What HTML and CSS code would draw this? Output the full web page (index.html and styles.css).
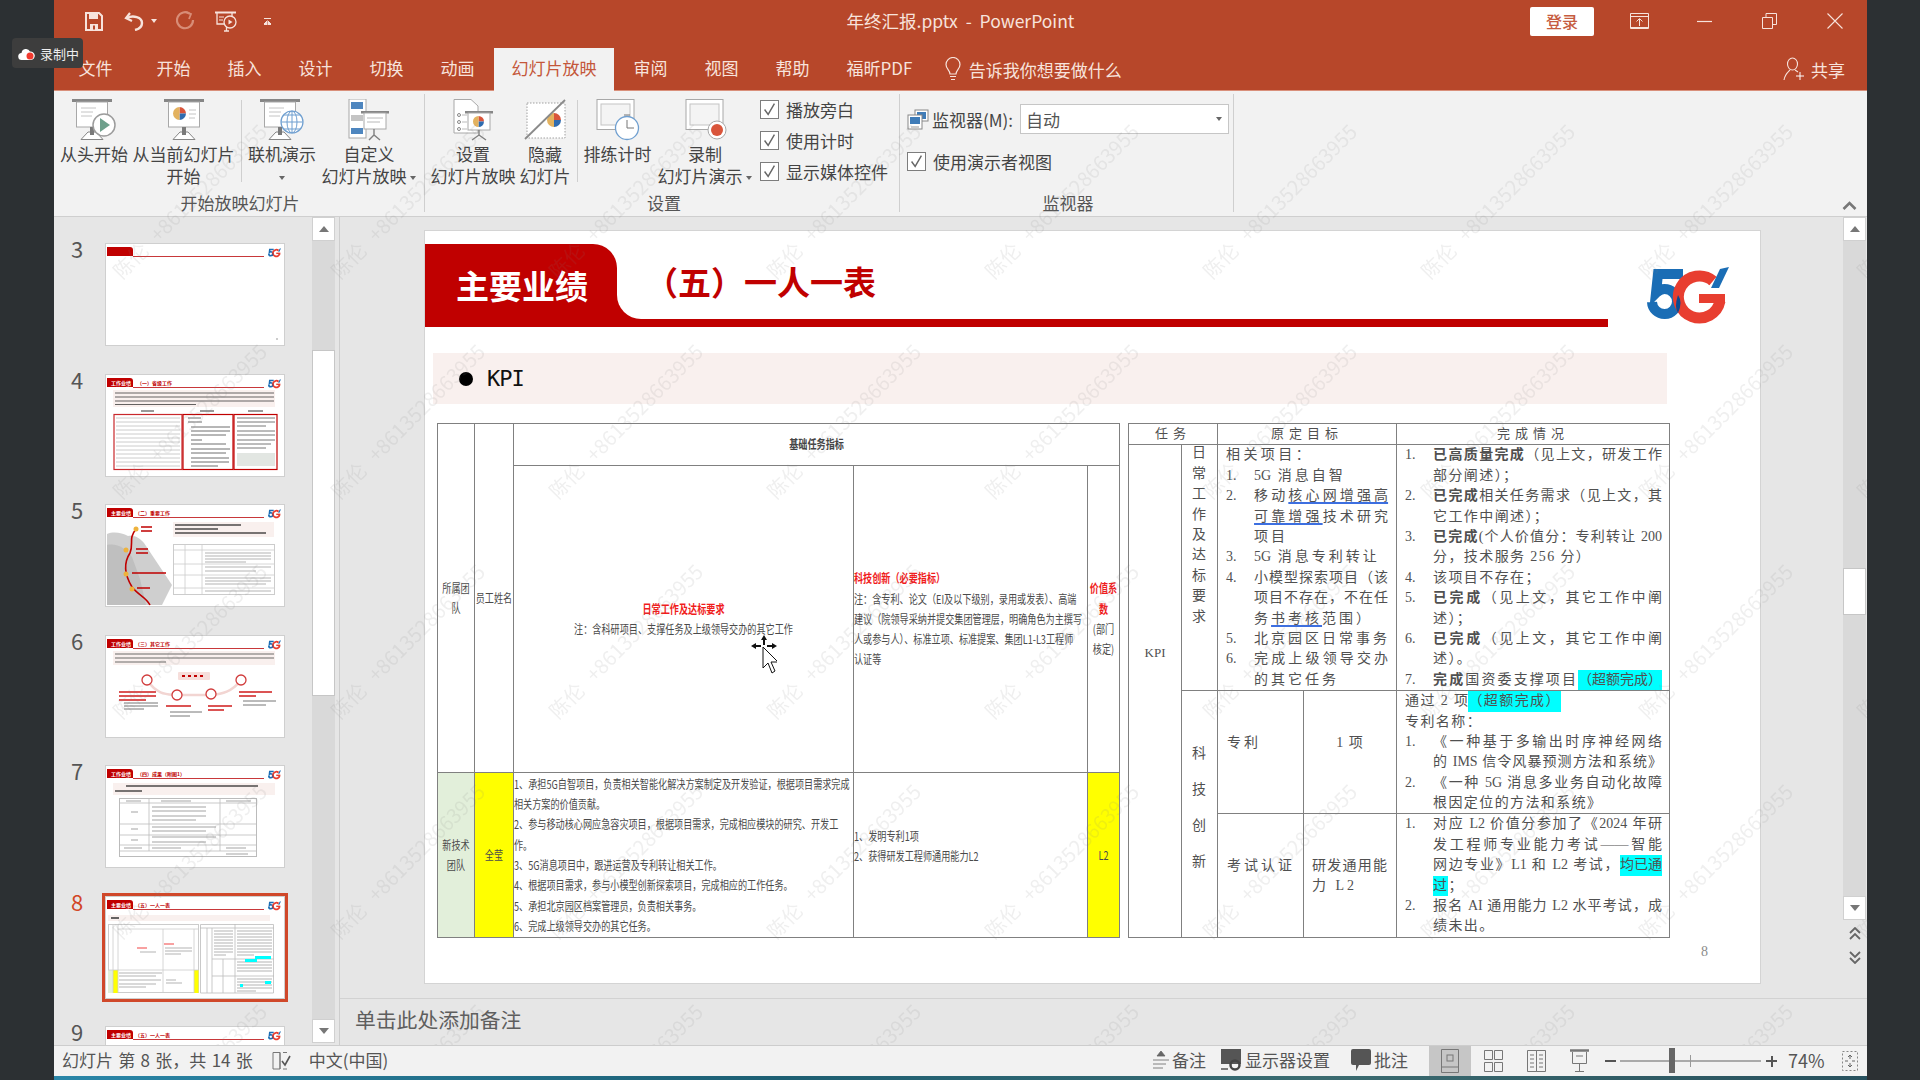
FILE: index.html
```html
<!DOCTYPE html>
<html lang="zh-CN">
<head>
  <meta charset="UTF-8">
  <title>年终汇报.pptx - PowerPoint</title>
  <link rel="stylesheet" href="styles.css">
</head>
<body>

<!-- shared drawings -->
<svg class="sprite" width="0" height="0">
  <symbol id="logo5g" viewBox="0 0 82 59">
    <path d="M36 7H11L9 26C12 23 15 22 17.5 22A12.5 12.5 0 1 1 5 35" fill="none" stroke="#1a6db5" stroke-width="10"/>
    <path d="M66 14A21 21 0 1 0 73 34" fill="none" stroke="#e83e30" stroke-width="11"/>
    <rect x="52" y="27" width="26" height="9" fill="#e83e30"/>
    <path d="M31 28Q36 35 31 46Q27 40 31 28Z" fill="#0b4a90"/>
    <path d="M57 8H67L62 18Z" fill="#e83e30"/>
    <path d="M73 2L82 0L72 21H64Z" fill="#1a6db5"/>
  </symbol>
  <symbol id="screen" viewBox="0 0 44 42">
    <rect x="0" y="0" width="40" height="3" fill="#868686"/>
    <rect x="4.5" y="3" width="31" height="25" fill="#fff" stroke="#a8a8a8"/>
    <path d="M9 40.5L16 33H24L31 40.5Z" fill="#fff" stroke="#868686"/>
    <rect x="18" y="28" width="4" height="8" fill="#7a7a7a"/>
  </symbol>
  <symbol id="pie" viewBox="0 0 14 14">
    <path d="M7 7V0A7 7 0 0 1 14 7Z" fill="#d9553b"/>
    <path d="M7 7H14A7 7 0 0 1 7 14Z" fill="#2f6cb0"/>
    <path d="M7 7V14A7 7 0 0 1 7 0Z" fill="#e3b25f"/>
  </symbol>
  <symbol id="tick" viewBox="0 0 19 19">
    <path d="M4 9.5L8 15L15 3" fill="none" stroke="#666" stroke-width="1.6"/>
  </symbol>
  <symbol id="th-head" viewBox="0 0 178 101">
    <path d="M1 3H24Q27 3 27 6V12H1Z" fill="#c00000"/>
    <path d="M27 12.5H158" stroke="#c8383a" stroke-width="1.2"/>
    <use href="#logo5g" x="162" y="4" width="13" height="10"/>
  </symbol>
</svg>

<div class="window">
<div class="app">

  <header class="titlebar">
    <div class="qat">
      <svg class="qat-save" width="18" height="19" viewBox="0 0 18 19"><path d="M1 1H14L17 4V18H1Z" fill="none" stroke="#f7e3dc" stroke-width="2"/><rect x="4" y="1" width="9" height="6" fill="#f7e3dc"/><rect x="5" y="12" width="8" height="6" fill="#f7e3dc"/><rect x="8" y="13.5" width="2" height="4" fill="#b7472a"/></svg>
      <svg class="qat-undo" width="21" height="20" viewBox="0 0 21 20"><path d="M6 2L2 7L8 10" fill="none" stroke="#f7e3dc" stroke-width="2.2"/><path d="M3 7C9 4 18 6 18 12C18 16 15 18 11 19" fill="none" stroke="#f7e3dc" stroke-width="2.4"/></svg>
      <span class="caret caret-light qat-caret"></span>
      <svg class="qat-redo" width="20" height="20" viewBox="0 0 20 20"><path d="M14 3A8 8 0 1 0 17 9" fill="none" stroke="#d88d77" stroke-width="2.2"/><path d="M10 1L15 3L13 8" fill="none" stroke="#d88d77" stroke-width="1.8"/></svg>
      <svg class="qat-show" width="24" height="21" viewBox="0 0 24 21"><path d="M1 1.5H22" stroke="#f7e3dc" stroke-width="2"/><path d="M3 2V13H12M18 2V6M10 20H15M12.5 13V20" fill="none" stroke="#f7e3dc" stroke-width="1.3"/><circle cx="16" cy="11" r="6" fill="#b7472a" stroke="#f7e3dc" stroke-width="1.3"/><path d="M14.5 8.5L18.5 11L14.5 13.5Z" fill="#f7e3dc"/><path d="M5 6H10M5 9H9" stroke="#f7e3dc"/></svg>
      <span class="qat-more"></span>
    </div>
    <div class="doc-title">年终汇报.pptx&nbsp;&nbsp;-&nbsp;&nbsp;PowerPoint</div>
    <div class="win-ctrls">
      <button class="login">登录</button>
      <span class="ctrl"><svg width="19" height="16" viewBox="0 0 19 16"><path d="M.5.5H18.5V15.5H.5ZM.5 3.5H18.5M9.5 13V6M6.5 8.5L9.5 5.5L12.5 8.5M.5 14.5H18.5" fill="none" stroke="#f7e3dc"/></svg></span>
      <span class="ctrl"><svg width="15" height="3" viewBox="0 0 15 3"><path d="M0 1.5H15" stroke="#f7e3dc" stroke-width="1.2"/></svg></span>
      <span class="ctrl"><svg width="15" height="16" viewBox="0 0 15 16"><path d="M.5 4.5H10.5V15.5H.5ZM4 4.5V.5H14.5V11.5H10.5" fill="none" stroke="#f7e3dc"/></svg></span>
      <span class="ctrl"><svg width="16" height="16" viewBox="0 0 16 16"><path d="M.5.5L15.5 15.5M15.5.5L.5 15.5" stroke="#f7e3dc" stroke-width="1.1"/></svg></span>
    </div>
  </header>

  <nav class="tabs">
    <span class="tab tab-file">文件</span>
    <span class="tab">开始</span>
    <span class="tab">插入</span>
    <span class="tab">设计</span>
    <span class="tab">切换</span>
    <span class="tab">动画</span>
    <span class="tab active">幻灯片放映</span>
    <span class="tab">审阅</span>
    <span class="tab">视图</span>
    <span class="tab">帮助</span>
    <span class="tab">福昕PDF</span>
    <span class="tell">
      <svg width="18" height="24" viewBox="0 0 18 24"><path d="M6 17C6 13 2 12 2 7.5A7 7 0 0 1 16 7.5C16 12 12 13 12 17ZM6 19.5H12M7 22.5H11" fill="none" stroke="#f7e3dc" stroke-width="1.2"/></svg>
      告诉我你想要做什么
    </span>
    <span class="share">
      <svg width="22" height="24" viewBox="0 0 22 24"><ellipse cx="9.5" cy="7" rx="5" ry="6" fill="none" stroke="#f7e3dc" stroke-width="1.1"/><path d="M1 23C2 17 5 15 7 13M12 13L15 15" fill="none" stroke="#f7e3dc" stroke-width="1.1"/><path d="M13 19H21M17 15V23" stroke="#fff"/></svg>
      共享
    </span>
  </nav>

  <section class="ribbon">
    <div class="group group-start">
      <div class="group-body">
        <div class="rbtn w72">
          <svg class="ricon" viewBox="0 0 44 42"><use href="#screen"/><path d="M9 9H24M9 13H21M9 17H20" stroke="#c4c4c4"/><circle cx="32" cy="26" r="11" fill="#fff" stroke="#9c9c9c" stroke-width="1.5"/><path d="M28 19L38 26L28 33Z" fill="#6ea08c"/></svg>
          <span>从头开始</span>
        </div>
        <div class="rbtn w107">
          <svg class="ricon" viewBox="0 0 44 42"><use href="#screen" x="2"/><use href="#pie" x="11" y="8" width="13" height="13"/><path d="M27 11H34M27 15H34M27 19H33" stroke="#c4c4c4"/></svg>
          <span>从当前幻灯片<br>开始</span>
        </div>
        <i class="rsep"></i>
        <div class="rbtn w72">
          <svg class="ricon" viewBox="0 0 44 42"><use href="#screen"/><path d="M9 9H24M9 13H21M9 17H20" stroke="#c4c4c4"/><circle cx="32" cy="23" r="11" fill="#fff" stroke="#6f9fd0" stroke-width="1.2"/><path d="M21 23H43M32 12V34M24 16H40M24 30H40" stroke="#6f9fd0"/><ellipse cx="32" cy="23" rx="5" ry="11" fill="none" stroke="#6f9fd0"/></svg>
          <span>联机演示<br><span class="caret"></span></span>
        </div>
        <div class="rbtn w102">
          <svg class="ricon" viewBox="0 0 44 42"><rect x="2" y="0" width="17" height="39" fill="#fff" stroke="#a8a8a8"/><rect x="4" y="3" width="12" height="7" fill="#4e86bf"/><rect x="4" y="16" width="12" height="6" fill="#c4c4c4"/><rect x="4" y="29" width="12" height="6" fill="#4e86bf"/><rect x="14" y="12" width="28" height="2.5" fill="#868686"/><rect x="17" y="14" width="22" height="16" fill="#fff" stroke="#a8a8a8"/><path d="M20 19H36M20 23H33" stroke="#b8b8b8"/><path d="M27 30V37M22 41L27 36L33 41" fill="none" stroke="#808080" stroke-width="1.4"/></svg>
          <span>自定义<br>幻灯片放映 <span class="caret"></span></span>
        </div>
      </div>
      <div class="glabel">开始放映幻灯片</div>
    </div>

    <div class="group group-setup">
      <div class="group-body">
        <div class="rbtn w88">
          <svg class="ricon" viewBox="0 0 44 42"><path d="M3 .5H20L27 7V34H3Z" fill="#fff" stroke="#a8a8a8"/><circle cx="8" cy="16" r="1.5" fill="none" stroke="#888"/><circle cx="8" cy="23" r="1.5" fill="none" stroke="#888"/><circle cx="8" cy="30" r="1.5" fill="none" stroke="#888"/><path d="M11 16H16M11 23H16M11 30H16" stroke="#bbb"/><rect x="14" y="12" width="28" height="2.5" fill="#868686"/><rect x="17" y="14" width="22" height="17" fill="#fff" stroke="#a8a8a8"/><use href="#pie" x="22" y="17" width="11" height="11"/><path d="M28 31V37M21 41L28 36L35 41" fill="none" stroke="#808080" stroke-width="1.4"/></svg>
          <span>设置<br>幻灯片放映</span>
        </div>
        <div class="rbtn w56">
          <svg class="ricon" viewBox="0 0 44 42"><rect x="4" y="4" width="38" height="35" fill="#fff" stroke="#a0a0a0" stroke-dasharray="1.5 1.5"/><use href="#pie" x="24" y="14" width="14" height="14"/><path d="M2 40L42 1" stroke="#8a8a8a" stroke-width="1.8"/></svg>
          <span>隐藏<br>幻灯片</span>
        </div>
        <i class="rsep"></i>
        <div class="rbtn w71">
          <svg class="ricon" viewBox="0 0 44 42"><rect x="1" y=".5" width="37" height="30" fill="#fff" stroke="#a8a8a8"/><rect x="5" y="5" width="29" height="21" fill="#f4f4f4" stroke="#c4c4c4"/><circle cx="31" cy="29" r="11.5" fill="#fff" stroke="#6f9fd0" stroke-width="1.3"/><path d="M31 21V29H38M28 16H34" fill="none" stroke="#777"/></svg>
          <span>排练计时</span>
        </div>
        <div class="rbtn w104">
          <svg class="ricon" viewBox="0 0 44 42"><rect x="3" y=".5" width="37" height="30" fill="#fff" stroke="#a8a8a8"/><rect x="7" y="5" width="29" height="21" fill="#f4f4f4" stroke="#c4c4c4"/><circle cx="34" cy="31" r="9" fill="#fff" stroke="#a8a8a8"/><circle cx="34" cy="31" r="6" fill="#d9553b"/></svg>
          <span>录制<br>幻灯片演示 <span class="caret"></span></span>
        </div>
        <div class="checks">
          <label class="chk"><svg class="box"><use href="#tick"/></svg>播放旁白</label>
          <label class="chk"><svg class="box"><use href="#tick"/></svg>使用计时</label>
          <label class="chk"><svg class="box"><use href="#tick"/></svg>显示媒体控件</label>
        </div>
      </div>
      <div class="glabel">设置</div>
    </div>

    <div class="group group-monitor">
      <div class="group-body monitor-body">
        <div class="monitor-row">
          <svg width="22" height="21" viewBox="0 0 22 21"><rect x="8" y="1" width="13" height="11" fill="#fff" stroke="#888"/><rect x="10" y="3" width="9" height="7" fill="#3f7cb8"/><rect x="1" y="6" width="14" height="14" fill="#fff" stroke="#888"/><rect x="3" y="8" width="10" height="7" fill="#3f7cb8"/><path d="M4 18H12" stroke="#999"/></svg>
          <span class="monitor-name">监视器(M):</span>
          <div class="select"><span>自动</span><span class="caret"></span></div>
        </div>
        <label class="chk chk-present"><svg class="box"><use href="#tick"/></svg>使用演示者视图</label>
      </div>
      <div class="glabel">监视器</div>
    </div>

    <svg class="collapse" width="15" height="10" viewBox="0 0 15 10"><path d="M1.5 8L7.5 2L13.5 8" fill="none" stroke="#777" stroke-width="2.6"/></svg>
  </section>

  <div class="workspace">
    <aside class="sidepane">
      <div class="thumbs">

        <div class="thumb-row"><span class="num">3</span>
          <div class="thumb"><svg viewBox="0 0 178 101"><use href="#th-head"/><path d="M170 95H172" stroke="#999"/></svg></div>
        </div>

        <div class="thumb-row"><span class="num">4</span>
          <div class="thumb"><svg viewBox="0 0 178 101"><use href="#th-head"/>
            <text class="th-tab" x="5" y="10">工作业绩</text><text class="th-title" x="31" y="10">（一）省级工作</text>
            <rect x="7" y="15" width="162" height="17" fill="#f9f0ee"/>
            <path d="M9 18H168M9 22H168M9 26H168M9 29.500H90" stroke="#333" stroke-width="1.2" opacity=".75"/>
            <path d="M35 36H48M94 36H108M142 36H157" stroke="#999" stroke-width="2"/>
            <rect x="8" y="39.500" width="68" height="55" fill="#fff" stroke="#c9282c" stroke-width="1.200"/>
            <rect x="77" y="39.500" width="50" height="55" fill="#fff" stroke="#c00000" stroke-width="1.200"/>
            <rect x="128" y="39.500" width="43" height="55" fill="#fff" stroke="#c00000" stroke-width="1.200"/>
            <path d="M10 43H74M10 47H74M10 51H74M10 55H74M10 59H74M10 63H74M10 67H74M10 71H74M10 75H74M10 79H74M10 83H74M10 87H74M10 91H74" stroke="#ccc"/>
            <path d="M82 43H95M82 47H96M85 52H124M85 56H124M85 60H120M85 65H96M85 69H120M85 74H124M85 78H120M85 83H123M85 87H123M85 91H112" stroke="#333" opacity=".7"/>
            <path d="M131 43H169M131 47H169M131 51H160M131 56H169M131 60H169M131 65H169M131 69H165M131 73H160" stroke="#333" opacity=".65"/>
            <rect x="131" y="78" width="38" height="13" fill="#e2e6e2"/>
          </svg></div>
        </div>

        <div class="thumb-row"><span class="num">5</span>
          <div class="thumb"><svg viewBox="0 0 178 101"><use href="#th-head"/>
            <text class="th-tab" x="5" y="10">主要业绩</text><text class="th-title" x="29" y="10">（二）重要工作</text>
            <path d="M1 29C8 26 16 28 22 31C30 30 34 34 38 38L66 80L56 100H1Z" fill="#cfcfcf"/>
            <path d="M1 40C12 38 20 44 26 52L34 74L40 100H1Z" fill="#b8b8b8" opacity=".7"/>
            <path d="M30 24C22 34 28 38 24 48C16 60 20 72 26 82C32 90 40 92 44 100" fill="none" stroke="#c00000" stroke-width="1.6"/>
            <circle cx="30" cy="24" r="2.500" fill="#eeb23c"/><circle cx="20" cy="45" r="2.500" fill="#eeb23c"/><circle cx="20" cy="69" r="2.500" fill="#eeb23c"/><circle cx="26" cy="84" r="2.500" fill="#eeb23c"/>
            <path d="M35 22H46M35 26H46M30 44H42M30 48H42M26 68H60M31 83H44" stroke="#c00000" stroke-width="1.6"/>
            <rect x="67" y="17" width="101" height="15" fill="#f9f0ee"/>
            <path d="M69 20H135M69 24H112M69 28H160" stroke="#222" stroke-width="1.3" opacity=".8"/>
            <rect x="67.500" y="39.500" width="101" height="50" fill="#fff" stroke="#ccc"/>
            <path d="M67 45H168M67 59H168M67 70H168M67 83H168M79 40V89M96 40V89" stroke="#ccc" stroke-width=".8"/>
            <path d="M99 48H165M99 51H165M99 54H165M99 57H140M99 62H165M99 66H150M99 73H165M99 76H165M99 79H160M99 86H165" stroke="#aaa" stroke-width=".9"/>
          </svg></div>
        </div>

        <div class="thumb-row"><span class="num">6</span>
          <div class="thumb"><svg viewBox="0 0 178 101"><use href="#th-head"/>
            <text class="th-tab" x="5" y="10">工作业绩</text><text class="th-title" x="29" y="10">（三）其它工作</text>
            <rect x="7" y="15" width="162" height="14" fill="#f9f0ee"/>
            <path d="M9 18H168M9 22H168M9 26H60" stroke="#333" stroke-width="1.2" opacity=".7"/>
            <rect x="72" y="36" width="32" height="8" rx="1" fill="#f6dedb"/>
            <path d="M76 40H100" stroke="#c00000" stroke-width="2" stroke-dasharray="3 3"/>
            <path d="M41 44C52 60 62 58 71 59H105C116 58 126 56 135 44" fill="none" stroke="#f2d5d2" stroke-width="2.500"/>
            <g fill="#fff" stroke="#d13b3b" stroke-width="1.300"><circle cx="41" cy="44" r="5"/><circle cx="71" cy="59" r="5"/><circle cx="105" cy="58" r="5"/><circle cx="135" cy="44" r="5"/></g>
            <path d="M13 56H50M13 60H50M13 64H40M60 70H85M102 70H126M102 74H118M133 56H166M133 60H150" stroke="#d01c1c" stroke-width="1.5"/>
            <path d="M18 67H52M18 70H52M18 73H38M64 76H96M64 80H84M137 65H170M137 69H160" stroke="#666" stroke-width=".9"/>
          </svg></div>
        </div>

        <div class="thumb-row"><span class="num">7</span>
          <div class="thumb"><svg viewBox="0 0 178 101"><use href="#th-head"/>
            <text class="th-tab" x="5" y="10">工作业绩</text><text class="th-title" x="31" y="10">（四）成果（附图1）</text>
            <rect x="7" y="17" width="162" height="12" fill="#f9f0ee"/>
            <path d="M20 20H152M9 25H36" stroke="#222" stroke-width="1.400" opacity=".8"/>
            <rect x="13.500" y="32.500" width="137" height="58" fill="#fff" stroke="#bbb"/>
            <path d="M13 37H151M13 58H151M13 69H151M13 79H151M13 85H151M43 32V85M114 32V85" stroke="#bbb" stroke-width=".8"/>
            <path d="M20 35H35M55 35H85M120 35H145M25 46H32M46 41H100M46 45H100M46 50H100M46 54H90M25 63H32M46 61H110M46 65H100M25 74H32M46 71H110M46 76H100M18 82H36M46 82H75M120 82H140M120 88H142" stroke="#999" stroke-width=".9"/>
          </svg></div>
        </div>

        <div class="thumb-row selected"><span class="num">8</span>
          <div class="thumb"><svg viewBox="0 0 178 101"><use href="#th-head"/>
            <text class="th-tab" x="5" y="10">主要业绩</text><text class="th-title" x="29" y="10">（五）一人一表</text>
            <rect x="2" y="18" width="162" height="6" fill="#f9f0ee"/>
            <path d="M5 21H13" stroke="#333" stroke-width="1.5"/>
            <rect x="2.500" y="27.500" width="90" height="68" fill="#fff" stroke="#ccc"/>
            <rect x="2" y="73" width="5" height="23" fill="#e2efda"/><rect x="7" y="73" width="5" height="23" fill="#ffff00"/><rect x="88" y="73" width="4.500" height="23" fill="#ffff00"/>
            <path d="M2 73H92M7 27V96M12 27V96M57 32V96M88 32V96M12 32H92" stroke="#ccc" stroke-width=".8"/>
            <path d="M31 51H41M58 47H68" stroke="#f24444" stroke-width="1.200"/>
            <path d="M34 55H50M59 51H86M59 54H86M59 57H75M13 76H56M13 79H50M13 83H55M13 87H50M13 90H40M60 83H70M60 86H76" stroke="#aaa" stroke-width=".9"/>
            <path d="M94.500 27.500H167.500V96H94.500ZM94 31H168M101 31V96M106 31V96M129 27V96M106 62H168M106 79H168M117 62V96" fill="#fff" stroke="#bbb" stroke-width=".8"/>
            <path d="M108 34H127M108 37H127M108 40H127M108 43H127M108 46H127M108 49H127M108 52H127M108 55H127M108 58H120M131 34H166M131 37H166M131 40H166M131 43H166M131 46H166M131 49H166M131 52H166M131 55H166M131 58H148M131 65H166M131 68H166M131 71H166M131 74H166M131 82H166M131 85H166M131 88H166M131 91H166M131 94H150" stroke="#aaa" stroke-width=".9"/>
            <rect x="149" y="59" width="16" height="3" fill="#00ffff"/><rect x="139" y="62" width="12" height="3" fill="#00ffff"/><rect x="159" y="84" width="6" height="3" fill="#00ffff"/><rect x="134" y="87" width="3" height="3" fill="#00ffff"/>
          </svg></div>
        </div>

        <div class="thumb-row"><span class="num">9</span>
          <div class="thumb"><svg viewBox="0 0 178 101"><use href="#th-head"/>
            <text class="th-tab" x="5" y="10">主要业绩</text><text class="th-title" x="29" y="10">（五）一人一表</text>
          </svg></div>
        </div>

      </div>
      <div class="vbar thumb-bar">
        <span class="vbtn"><i class="tri-up"></i></span>
        <span class="vtrack t-top"></span>
        <span class="vthumb t-thumb"></span>
        <span class="vtrack t-rest"></span>
        <span class="vbtn"><i class="tri-down"></i></span>
      </div>
    </aside>

    <main class="main">
      <div class="editor">
        <div class="canvas">
          <article class="slide">
            <div class="slide-head">
              <div class="slide-tab">主要业绩</div>
              <div class="slide-title-wrap"><h1 class="slide-title">（五）一人一表</h1></div>
              <svg class="slide-logo"><use href="#logo5g"/></svg>
            </div>
            <div class="kpi-bar"><span class="dot"></span>KPI</div>

            <div class="slide-tables">
              <table class="tbl tbl-left">
                <colgroup><col class="c37"><col class="c39"><col class="c340"><col class="c234"><col class="c32"></colgroup>
                <tr class="r42">
                  <td rowspan="2"><div class="sq ctr">所属团<br>队</div></td>
                  <td rowspan="2"><div class="sq ctr">员工姓名</div></td>
                  <td colspan="3" class="ctr"><div class="sq head-sq">基础任务指标</div></td>
                </tr>
                <tr class="r307">
                  <td><div class="sq ctr"><b class="red">日常工作及达标要求</b><br>注：含科研项目、支撑任务及上级领导交办的其它工作</div></td>
                  <td><div class="sq"><b class="red">科技创新（必要指标）</b><br>注：含专利、论文（EI及以下级别，录用或发表）、高端<br>建议（院领导采纳并提交集团管理层，明确角色为主撰写<br>人或参与人）、标准立项、标准提案、集团L1-L3工程师<br>认证等</div></td>
                  <td><div class="sq ctr"><b class="red">价值系<br>数</b><br>(部门<br>核定)</div></td>
                </tr>
                <tr class="r165">
                  <td class="fill-green"><div class="sq ctr">新技术<br>团队</div></td>
                  <td class="fill-yellow"><div class="sq ctr">全莹</div></td>
                  <td><div class="sq">1、承担5G自智项目，负责相关智能化解决方案制定及开发验证，根据项目需求完成<br>相关方案的价值贡献。<br>2、参与移动核心网应急容灾项目，根据项目需求，完成相应模块的研究、开发工<br>作。<br>3、5G消息项目中，跟进运营及专利转让相关工作。<br>4、根据项目需求，参与小模型创新探索项目，完成相应的工作任务。<br>5、承担北京园区档案管理员，负责相关事务。<br>6、完成上级领导交办的其它任务。</div></td>
                  <td class="lift-s"><div class="sq">1、发明专利1项<br>2、获得研发工程师通用能力L2</div></td>
                  <td class="fill-yellow"><div class="sq ctr">L2</div></td>
                </tr>
              </table>

              <table class="tbl tbl-right">
                <colgroup><col class="c53"><col class="c36"><col class="c86"><col class="c93"><col class="c273"></colgroup>
                <tr class="r21">
                  <td colspan="2" class="hd">任务</td>
                  <td colspan="2" class="hd">原定目标</td>
                  <td class="hd">完成情况</td>
                </tr>
                <tr class="r245">
                  <td rowspan="3" class="kpi-cell">KPI</td>
                  <td class="top"><div class="vtext v-daily">日常工作及达标要求</div></td>
                  <td colspan="2" class="top goal">
                    <p class="l sp3">相关项目：</p>
                    <div class="it"><span class="n">1.</span><div><p class="l sp2"><span class="ls0">5G</span> 消息自智</p></div></div>
                    <div class="it"><span class="n">2.</span><div><p class="l j">移动<u>核心网增强高</u></p><p class="l j"><u>可靠增强</u>技术研究</p><p class="l sp2">项目</p></div></div>
                    <div class="it"><span class="n">3.</span><div><p class="l sp2"><span class="ls0">5G</span> 消息专利转让</p></div></div>
                    <div class="it"><span class="n">4.</span><div><p class="l j">小模型探索项目（该</p><p class="l j">项目不存在，不在任</p><p class="l sp2">务<u>书考核</u>范围）</p></div></div>
                    <div class="it"><span class="n">5.</span><div><p class="l sp2">北京园区日常事务</p></div></div>
                    <div class="it"><span class="n">6.</span><div><p class="l j">完成上级领导交办</p><p class="l sp2">的其它任务</p></div></div>
                  </td>
                  <td class="top done">
                    <div class="it"><span class="n">1.</span><div><p class="l j"><b>已高质量完成</b>（见上文，研发工作</p><p class="l sp1">部分阐述）；</p></div></div>
                    <div class="it"><span class="n">2.</span><div><p class="l j"><b>已完成</b>相关任务需求（见上文，其</p><p class="l sp1">它工作中阐述）；</p></div></div>
                    <div class="it"><span class="n">3.</span><div><p class="l j"><b>已完成</b>(个人价值分：专利转让 200</p><p class="l sp1">分，技术服务 256 分）</p></div></div>
                    <div class="it"><span class="n">4.</span><div><p class="l sp1">该项目不存在；</p></div></div>
                    <div class="it"><span class="n">5.</span><div><p class="l j"><b>已完成</b>（见上文，其它工作中阐</p><p class="l sp1">述）；</p></div></div>
                    <div class="it"><span class="n">6.</span><div><p class="l j"><b>已完成</b>（见上文，其它工作中阐</p><p class="l sp1">述）。</p></div></div>
                    <div class="it"><span class="n">7.</span><div><p class="l j"><b>完成</b>国资委支撑项目<mark>（超额完成）</mark></p></div></div>
                  </td>
                </tr>
                <tr class="r122">
                  <td rowspan="2" class="top-tech"><div class="vtext v-tech">科技创新</div></td>
                  <td class="sub lift-p">专利</td>
                  <td class="ctr lift-p val">1 项</td>
                  <td class="top done">
                    <p class="l sp1"><span class="lead">通过 2 项</span><mark>（超额完成）</mark></p>
                    <p class="l sp1">专利名称：</p>
                    <div class="it"><span class="n">1.</span><div><p class="l j">《一种基于多输出时序神经网络</p><p class="l j">的 IMS 信令风暴预测方法和系统》</p></div></div>
                    <div class="it"><span class="n">2.</span><div><p class="l j">《一种 5G 消息多业务自动化故障</p><p class="l sp1">根因定位的方法和系统》</p></div></div>
                  </td>
                </tr>
                <tr class="r124">
                  <td class="sub lift-e">考试认证</td>
                  <td class="val val-e"><p class="l j">研发通用能</p><p class="l sp2">力 L2</p></td>
                  <td class="top done">
                    <div class="it"><span class="n">1.</span><div><p class="l j">对应 L2 价值分参加了《2024 年研</p><p class="l j">发工程师专业能力考试——智能</p><p class="l j">网边专业》L1 和 L2 考试，<mark>均已通</mark></p><p class="l sp1"><mark>过</mark>；</p></div></div>
                    <div class="it"><span class="n">2.</span><div><p class="l j">报名 AI 通用能力 L2 水平考试，成</p><p class="l sp1">绩未出。</p></div></div>
                  </td>
                </tr>
              </table>
            </div>
            <div class="page-num">8</div>

            <svg class="cursor" width="26" height="40" viewBox="0 0 26 40">
              <path d="M13 0L10 5H12V10H14V5H16ZM0 11L5 8V10H10V12H5V14ZM26 11L21 8V10H16V12H21V14Z" fill="#111"/>
              <path d="M12 12V33L17 28L21 38L24 36L20 27H27Z" fill="#fff" stroke="#111"/>
            </svg>
          </article>
        </div>
        <div class="vbar main-bar">
          <span class="vbtn"><i class="tri-up"></i></span>
          <span class="vtrack m-top"></span>
          <span class="vthumb m-thumb"></span>
          <span class="vtrack m-rest"></span>
          <span class="vbtn"><i class="tri-down"></i></span>
          <span class="pager">
            <svg width="12" height="13" viewBox="0 0 12 13"><path d="M1 6L6 1L11 6M1 12L6 7L11 12" fill="none" stroke="#666" stroke-width="1.8"/></svg>
            <svg width="12" height="13" viewBox="0 0 12 13"><path d="M1 1L6 6L11 1M1 7L6 12L11 7" fill="none" stroke="#666" stroke-width="1.8"/></svg>
          </span>
        </div>
      </div>
      <div class="notes">单击此处添加备注</div>
    </main>
  </div>

  <footer class="status">
    <span class="st-count">幻灯片 第 8 张，共 14 张</span>
    <svg class="st-spell" width="19" height="20" viewBox="0 0 19 20"><path d="M1 1.500H8V18H1ZM8 1.500V18M11 1.500H15M11 18H15" fill="none" stroke="#777"/><path d="M10 10L13 14L18 5" fill="none" stroke="#555" stroke-width="1.600"/></svg>
    <span class="st-lang">中文(中国)</span>
    <div class="st-right">
      <span class="st-item st-notes">
        <svg width="18" height="20" viewBox="0 0 18 20"><path d="M9 1L13 6H5ZM1 10H17M1 14H14M1 18H11" fill="#666" stroke="#666" stroke-width=".8"/></svg>备注
      </span>
      <span class="st-item st-display">
        <svg width="23" height="24" viewBox="0 0 23 24"><path d="M1 1H21V16H1Z" fill="#555"/><circle cx="15" cy="17" r="4.500" fill="none" stroke="#444" stroke-width="2.500"/><path d="M1 21H8" stroke="#555" stroke-width="1.500"/></svg>显示器设置
      </span>
      <span class="st-item st-comment">
        <svg width="22" height="24" viewBox="0 0 22 24"><path d="M3 1H19Q21 1 21 3V15Q21 17 19 17H9L6 23V17H3Q1 17 1 15V3Q1 1 3 1Z" fill="#555"/></svg>批注
      </span>
      <span class="view active-view"><svg width="18" height="24" viewBox="0 0 18 24"><path d="M.5.5H17.500V23.500H.5ZM.5 18H17.500" fill="none" stroke="#777"/><rect x="6" y="6" width="6" height="6" fill="none" stroke="#777"/></svg></span>
      <span class="view"><svg width="19" height="24" viewBox="0 0 19 24"><path d="M.5 1.500H8.500V10.500H.5ZM10.500 1.500H18.500V10.500H10.500ZM.5 13.500H8.500V22.500H.5ZM10.500 13.500H18.500V22.500H10.500Z" fill="none" stroke="#777"/></svg></span>
      <span class="view"><svg width="19" height="24" viewBox="0 0 19 24"><path d="M.5 1.500H9.500V22.500H.5ZM9.500 1.500H18.500V22.500H9.500ZM3 6H7M3 10H7M3 14H7M3 18H7M12 6H16M12 10H16M12 14H16M12 18H16" fill="none" stroke="#777"/></svg></span>
      <span class="view"><svg width="19" height="24" viewBox="0 0 19 24"><path d="M0 1.500H19" stroke="#777" stroke-width="2.500"/><path d="M2.500 3V14.500H16.500V3M6 7H13M9.500 15V22M5 22.500H14" fill="none" stroke="#777"/></svg></span>
      <div class="zoom">
        <i class="z-minus"></i>
        <div class="z-track"><i class="z-thumb"></i><i class="z-mid"></i></div>
        <i class="z-plus"></i>
      </div>
      <span class="z-value">74%</span>
      <svg class="z-fit" width="16" height="20" viewBox="0 0 16 20"><path d="M.5.5H15.500V19.500H.5Z" fill="none" stroke="#888" stroke-dasharray="2 2"/><path d="M8 4V8M6 6L8 4L10 6M8 16V12M6 14L8 16L10 14M3 10H6M13 10H10" fill="none" stroke="#666"/></svg>
    </div>
  </footer>
</div>

<!-- phone-number watermark laid over the whole window -->
<svg class="watermark">
  <defs>
    <pattern id="wm" x="486" y="237" width="218" height="220" patternUnits="userSpaceOnUse">
      <text class="wm-text" transform="translate(18 172) rotate(-45)">陈伦<tspan dx="12">+8613528663955</tspan></text>
    </pattern>
  </defs>
  <rect width="100%" height="100%" fill="url(#wm)"/>
</svg>
</div>

<div class="rec-badge">
  <svg width="17" height="15" viewBox="0 0 17 15"><path d="M4 14A3.500 3.500 0 0 1 3.500 7A4.500 4.500 0 0 1 12 5.500A4 4 0 0 1 13 14Z" fill="#fff"/><circle cx="12" cy="10" r="3.500" fill="#f23a2f"/></svg>
  录制中
</div>

</body>
</html>
```

FILE: styles.css
```css
* {
  box-sizing: border-box;
}
html, body {
  margin: 0;
  padding: 0;
  height: 100%;
  overflow: hidden;
}
body {
  font-family: "Noto Sans CJK SC", "Noto Sans", sans-serif;
  background: #2c3033;
  color: #444;
}
.sprite {
  position: absolute;
}
.window {
  position: relative;
  width: 1813px;
  height: 1080px;
  margin-left: 54px;
  background: linear-gradient(90deg, #2a86a8, #1d5f73 40%, #3b6b70 70%, #28515e);
}
.app {
  display: flex;
  flex-direction: column;
  height: 1076px;
  background: #e6e6e6;
}

/* title bar */
.titlebar {
  display: grid;
  grid-template-columns: 1fr auto 1fr;
  align-items: center;
  height: 48px;
  flex: none;
  padding-bottom: 6px;
  background: #b7472a;
  color: #f7e3dc;
}
.qat {
  display: flex;
  align-items: center;
}
.qat svg {
  flex: none;
}
.qat-save { margin-left: 31px; }
.qat-undo { margin-left: 21px; }
.qat-caret { margin-left: 6px; }
.qat-redo { margin-left: 19px; }
.qat-show { margin-left: 18px; }
.qat-more {
  width: 7px;
  height: 7px;
  margin-left: 26px;
  border-top: 1px solid #f7e3dc;
  background: linear-gradient(135deg, transparent 50%, #f7e3dc 50%) left / 50% 100% no-repeat,
              linear-gradient(225deg, transparent 50%, #f7e3dc 50%) right / 50% 100% no-repeat;
}
.doc-title {
  margin-bottom: 2px;
  font-size: 17.5px;
}
.win-ctrls {
  display: flex;
  align-items: center;
  justify-content: flex-end;
}
.login {
  width: 64px;
  height: 29px;
  margin-right: 13px;
  padding: 0;
  border: 0;
  border-radius: 2px;
  background: #fff;
  color: #c65c40;
  font-family: inherit;
  font-size: 16px;
  font-weight: 500;
}
.ctrl {
  display: flex;
  align-items: center;
  justify-content: center;
  width: 65px;
  height: 30px;
}

/* tabs */
.tabs {
  display: flex;
  align-items: stretch;
  gap: 2px;
  height: 43px;
  flex: none;
  padding-left: 7px;
  background: #b7472a;
  border-bottom: 1px solid #d9907b;
  color: #f7e3dc;
  font-size: 17px;
  line-height: 39px;
}
.tab {
  padding: 0 17.5px;
  white-space: nowrap;
}
.tab-file {
  margin-right: 7px;
}
.tab.active {
  height: 43px;
  background: #f2f2f2;
  color: #c4573a;
}
.tell {
  display: flex;
  align-items: center;
  gap: 7px;
  margin-left: 12px;
}
.share {
  display: flex;
  align-items: center;
  gap: 6px;
  margin-left: auto;
  margin-right: 22px;
}

/* ribbon */
.ribbon {
  display: flex;
  align-items: flex-start;
  height: 126px;
  flex: none;
  padding-top: 3px;
  background: #f2f2f2;
  border-bottom: 1px solid #cfcfcf;
  font-size: 17px;
}
.group {
  display: flex;
  flex-direction: column;
  height: 118px;
  border-right: 1px solid #cfcfcf;
}
.group-start { width: 371px; padding-left: 4px; }
.group-setup { width: 475px; padding-left: 4px; }
.group-monitor { width: 334px; padding-left: 7px; }
.group-body {
  display: flex;
  height: 100px;
}
.glabel {
  height: 18px;
  line-height: 18px;
  font-size: 17px;
  text-align: center;
  color: #555;
}
.group-start .glabel { padding-right: 2px; }
.group-monitor .glabel { padding-right: 4px; }
.rbtn {
  display: flex;
  flex-direction: column;
  align-items: center;
  flex: none;
  padding-top: 5px;
  line-height: 22px;
  text-align: center;
  white-space: nowrap;
}
.ricon {
  width: 44px;
  height: 42px;
  margin-bottom: 2px;
}
.w56 { width: 56px; }
.w71 { width: 71px; }
.w72 { width: 72px; }
.w88 { width: 88px; }
.w102 { width: 102px; }
.w104 { width: 104px; }
.w107 { width: 107px; }
.rsep {
  width: 1px;
  height: 82px;
  margin: 6px 4px 0;
  background: #cfcfcf;
}
.caret {
  display: inline-block;
  width: 0;
  height: 0;
  vertical-align: middle;
  border-left: 3.5px solid transparent;
  border-right: 3.5px solid transparent;
  border-top: 4px solid #666;
}
.caret-light {
  border-top-color: #f7e3dc;
}
.checks {
  display: flex;
  flex-direction: column;
  gap: 12px;
  margin-left: 3px;
  padding-top: 6px;
}
.chk {
  display: flex;
  align-items: center;
  gap: 7px;
  height: 19px;
  line-height: 19px;
  white-space: nowrap;
}
.box {
  width: 19px;
  height: 19px;
  flex: none;
  background: #fff;
  border: 1px solid #7d7d7d;
}
.monitor-body {
  flex-direction: column;
  padding-top: 10px;
}
.monitor-row {
  display: flex;
  align-items: center;
  height: 30px;
}
.monitor-name {
  margin-left: 3px;
}
.select {
  display: flex;
  align-items: center;
  justify-content: space-between;
  width: 209px;
  height: 30px;
  margin-left: 7px;
  padding: 0 6px 0 5px;
  background: #fff;
  border: 1px solid #c6c6c6;
  color: #555;
}
.chk-present {
  margin-top: 18px;
}
.collapse {
  align-self: flex-end;
  margin: 0 10px 5px auto;
}

/* thumbnails */
.workspace {
  display: flex;
  flex: 1;
  min-height: 0;
}
.sidepane {
  display: flex;
  width: 286px;
  flex: none;
  padding-right: 4px;
  border-right: 1px solid #cdcdcd;
}
.thumbs {
  width: 258px;
  flex: none;
  padding-top: 26px;
  overflow: hidden;
}
.thumb-row {
  display: flex;
  align-items: flex-start;
  height: 103px;
  margin-bottom: 27.5px;
}
.num {
  width: 51px;
  padding-left: 17px;
  font-size: 22px;
  line-height: 10px;
  color: #555;
}
.thumb {
  width: 180px;
  height: 103px;
  flex: none;
  background: #fff;
  border: 1px solid #cfcfcf;
}
.thumb svg {
  display: block;
  width: 178px;
  height: 101px;
}
.selected .num {
  color: #d24726;
}
.selected .thumb {
  outline: 3px solid #d0482a;
  outline-offset: 0;
}
.th-tab {
  font-size: 5px;
  font-weight: 700;
  fill: #fff;
}
.th-title {
  font-size: 5px;
  font-weight: 700;
  fill: #c00000;
}

/* scrollbars */
.vbar {
  display: flex;
  flex-direction: column;
  width: 23px;
  flex: none;
  background: #d9d9d9;
}
.thumb-bar {
  margin-bottom: 2px;
}
.main-bar {
  height: 100%;
  margin-right: 1px;
}
.vbtn {
  display: flex;
  align-items: center;
  justify-content: center;
  height: 24px;
  flex: none;
  background: #fff;
  border: 1px solid #d0d0d0;
}
.tri-up, .tri-down {
  width: 0;
  height: 0;
  border-left: 5.5px solid transparent;
  border-right: 5.5px solid transparent;
}
.tri-up {
  border-bottom: 6px solid #777;
}
.tri-down {
  border-top: 6px solid #777;
}
.vthumb {
  flex: none;
  background: #fff;
  border: 1px solid #c6c6c6;
}
.t-top { height: 109px; flex: none; }
.t-thumb { height: 346px; }
.t-rest { flex: 1; }
.m-top { height: 327px; flex: none; }
.m-thumb { height: 47px; }
.m-rest { flex: 1; }
.pager {
  display: flex;
  flex-direction: column;
  align-items: center;
  gap: 11px;
  height: 78px;
  flex: none;
  padding-top: 7px;
  background: #e6e6e6;
}

/* editor */
.main {
  display: flex;
  flex-direction: column;
  flex: 1;
  min-width: 0;
}
.editor {
  display: flex;
  height: 781px;
  flex: none;
}
.canvas {
  flex: 1;
  padding: 14px 0 0 85px;
}
.notes {
  flex: 1;
  padding-left: 15px;
  border-top: 1px solid #d2d2d2;
  background: #e6e6e6;
  color: #5e5e5e;
  font-size: 20.8px;
  line-height: 40px;
}

/* slide */
.slide {
  position: relative;
  width: 1335px;
  height: 752px;
  padding-top: 13px;
  background: #fff;
  box-shadow: 0 0 0 1px #d4d4d4;
}
.slide-head {
  display: flex;
  height: 83px;
}
.slide-tab {
  width: 192px;
  padding: 21px 0 0 31px;
  background: #c00000;
  border-top-right-radius: 24px;
  color: #fff;
  font-size: 33px;
  font-weight: 700;
  line-height: 40px;
}
.slide-title-wrap {
  width: 991px;
  background: linear-gradient(to top, #c00000 40px, transparent 40px);
}
.slide-title {
  height: 75px;
  margin: 0;
  padding: 17px 0 0 28px;
  background: #fff;
  border-bottom-left-radius: 24px;
  color: #c00000;
  font-size: 33px;
  font-weight: 700;
  line-height: 40px;
}
.slide-logo {
  width: 82px;
  height: 59px;
  margin: 23px 0 0 39px;
}
.kpi-bar {
  display: flex;
  align-items: center;
  width: 1234px;
  height: 51px;
  margin: 26px 0 0 8px;
  padding-left: 26px;
  background: #f9f0ee;
  color: #111;
  font-family: "DejaVu Sans Mono", monospace;
  font-size: 22px;
  letter-spacing: -1px;
}
.dot {
  width: 14px;
  height: 14px;
  margin-right: 14px;
  border-radius: 50%;
  background: #000;
}
.slide-tables {
  display: flex;
  align-items: flex-start;
  gap: 8px;
  margin: 19px 0 0 12px;
}
.tbl {
  flex: none;
  border-collapse: collapse;
  table-layout: fixed;
  color: #4a4a4a;
}
.tbl td {
  padding: 0;
  border: 1px solid #808080;
}
.tbl-left { width: 682px; }
.tbl-right {
  width: 541px;
  font-family: "Liberation Serif", "Noto Sans CJK SC", serif;
  font-size: 14px;
  line-height: 20.4px;
  color: #505050;
}
.c32 { width: 32px; }
.c36 { width: 36px; }
.c37 { width: 37px; }
.c39 { width: 39px; }
.c53 { width: 53px; }
.c86 { width: 86px; }
.c93 { width: 93px; }
.c234 { width: 234px; }
.c273 { width: 273px; }
.c340 { width: 340px; }
.r21 { height: 21px; }
.r42 { height: 42px; }
.r122 { height: 122px; }
.r124 { height: 124px; }
.r165 { height: 165px; }
.r245 { height: 245px; }
.r307 { height: 307px; }
.ctr { text-align: center; }

/* text of the left table is a squeezed picture in the original */
.sq {
  width: 131.6%;
  font-size: 12px;
  line-height: 20.3px;
  white-space: nowrap;
  transform: scaleX(.76);
  transform-origin: 0 50%;
}
.head-sq { font-weight: 700; color: #444; }
.red { color: #f01c1c; }
.lift-s { padding-bottom: 18px !important; }
.fill-green { background: #e2efda; }
.fill-yellow { background: #ffff00; }

.hd {
  text-align: center;
  letter-spacing: 5px;
  font-size: 13px;
}
.top {
  vertical-align: top;
}
.kpi-cell {
  padding-bottom: 76px !important;
  text-align: center;
  font-size: 13px;
}
.vtext {
  writing-mode: vertical-rl;
  text-orientation: upright;
  margin: 0 auto;
  padding-right: 3px;
  line-height: 36px;
  width: 36px;
}
.v-daily { letter-spacing: 6.4px; }
.top-tech { padding-top: 8px !important; }
.v-tech { letter-spacing: 22px; }
.goal { padding: 0 8px !important; }
.done { padding: 0 7px 0 8px !important; }
.it {
  display: grid;
  grid-template-columns: 28px 1fr;
}
.l {
  margin: 0;
  height: 20.4px;
}
.j { text-align-last: justify; }
.sp1 { letter-spacing: 1.4px; white-space: nowrap; }
.sp2 { letter-spacing: 3px; white-space: nowrap; }
.sp3 { letter-spacing: 3.4px; white-space: nowrap; }
.ls0 { letter-spacing: 0; }
.lead { margin-right: -1px; }
.tbl u {
  text-decoration: underline #3d6fe0 1.5px;
  text-underline-offset: 2px;
}
mark {
  display: inline-block;
  height: 20.4px;
  background: #00ffff;
  color: inherit;
}
.sub {
  padding-left: 9px !important;
  letter-spacing: 3px;
}
.val { letter-spacing: 1px; }
.val-e { padding: 0 8px !important; }
.lift-p { padding-bottom: 18px !important; }
.lift-e { padding-bottom: 20px !important; }
.page-num {
  margin-top: 6px;
  padding-right: 52px;
  text-align: right;
  color: #8c8c8c;
  font-family: "Liberation Serif", serif;
  font-size: 14px;
}
.cursor {
  position: absolute;
  left: 326px;
  top: 404px;
}

/* status bar */
.status {
  display: flex;
  align-items: center;
  height: 31px;
  flex: none;
  padding-left: 8px;
  background: #f2f2f2;
  border-top: 1px solid #cdcdcd;
  color: #555;
  font-size: 17px;
  white-space: nowrap;
}
.st-count {
  margin-bottom: 3px;
  word-spacing: 1.5px;
}
.st-spell { margin-left: 19px; }
.st-lang {
  margin-bottom: 3px;
  margin-left: 18px;
}
.st-right {
  display: flex;
  align-items: center;
  height: 100%;
  margin-left: auto;
}
.st-item {
  display: flex;
  align-items: center;
  gap: 2px;
  margin-bottom: 3px;
}
.st-display { margin-left: 14px; }
.st-comment { margin-left: 20px; }
.view {
  display: flex;
  align-items: center;
  justify-content: center;
  width: 42px;
  height: 100%;
  margin-left: 1px;
}
.active-view {
  margin-left: 21px;
  background: #c6c6c6;
}
.zoom {
  display: flex;
  align-items: center;
  gap: 4px;
  margin-left: 5px;
}
.z-minus, .z-plus {
  position: relative;
  display: block;
  width: 11px;
  height: 2px;
  background: #555;
}
.z-plus::after {
  content: "";
  position: absolute;
  left: 4.5px;
  top: -4.5px;
  width: 2px;
  height: 11px;
  background: #555;
}
.z-track {
  position: relative;
  width: 141px;
  height: 2px;
  background: #aaa;
}
/* slider thumb and the 100% mark sit on top of the track */
.z-thumb {
  position: absolute;
  left: 49px;
  top: -12px;
  width: 6px;
  height: 25px;
  background: #666;
}
.z-mid {
  position: absolute;
  left: 70px;
  top: -5px;
  width: 1px;
  height: 12px;
  background: #999;
}
.z-plus { margin-left: 1px; }
.z-value {
  width: 36px;
  margin-bottom: 3px;
  margin-left: 11px;
  font-size: 18px;
}
.z-fit {
  margin: 0 9px 0 18px;
}

/* overlays */
.watermark {
  position: absolute;
  left: 0;
  top: 91px;
  width: 1813px;
  height: 954px;
  pointer-events: none;
}
.wm-text {
  font-family: "Noto Sans CJK SC", sans-serif;
  font-size: 20px;
  fill: #808080;
  fill-opacity: .12;
}
.rec-badge {
  position: absolute;
  left: 12px;
  top: 38px;
  display: flex;
  align-items: center;
  gap: 5px;
  width: 71px;
  height: 30px;
  padding-left: 6px;
  border-radius: 4px;
  background: #3d3d3d;
  color: #eee;
  font-size: 13px;
}
```
